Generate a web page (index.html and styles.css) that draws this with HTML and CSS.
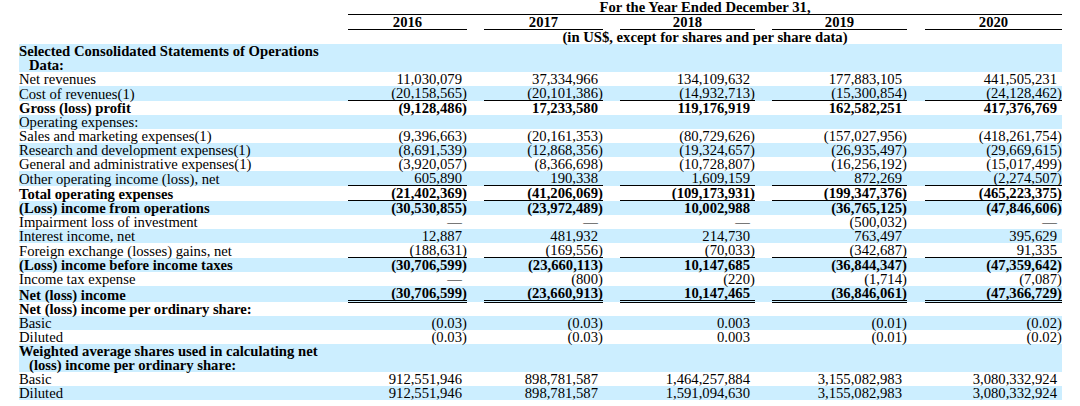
FILE: index.html
```html
<!DOCTYPE html>
<html>
<head>
<meta charset="utf-8">
<link rel="stylesheet" href="styles.css">
</head>
<body>
<table class="fin">
<colgroup>
<col class="c-label">
<col class="c-n1"><col class="c-p">
<col class="c-sp">
<col class="c-n1"><col class="c-p">
<col class="c-sp">
<col class="c-n2"><col class="c-p">
<col class="c-sp">
<col class="c-n2"><col class="c-p">
<col class="c-sp2">
<col class="c-n3"><col class="c-p">
</colgroup>
<thead>
<tr>
<td></td>
<td colspan="14" class="hd hd-top">For the Year Ended December 31,</td>
</tr>
<tr>
<td></td>
<td colspan="2" class="hd yr">2016</td><td></td>
<td colspan="2" class="hd yr">2017</td><td></td>
<td colspan="2" class="hd yr">2018</td><td></td>
<td colspan="2" class="hd yr">2019</td><td></td>
<td colspan="2" class="hd yr">2020</td>
</tr>
<tr>
<td></td>
<td colspan="14" class="hd">(in US$, except for shares and per share data)</td>
</tr>
</thead>
<tbody>
<tr class="blue b"><td class="label">Selected Consolidated Statements of Operations Data:</td><td></td><td></td><td></td><td></td><td></td><td></td><td></td><td></td><td></td><td></td><td></td><td></td><td></td><td></td></tr>
<tr><td class="label">Net revenues</td><td class="n">11,030,079</td><td class="p"></td><td></td><td class="n">37,334,966</td><td class="p"></td><td></td><td class="n">134,109,632</td><td class="p"></td><td></td><td class="n">177,883,105</td><td class="p"></td><td></td><td class="n">441,505,231</td><td class="p"></td></tr>
<tr class="blue ul"><td class="label">Cost of revenues(1)</td><td class="n">(20,158,565</td><td class="p">)</td><td></td><td class="n">(20,101,386</td><td class="p">)</td><td></td><td class="n">(14,932,713</td><td class="p">)</td><td></td><td class="n">(15,300,854</td><td class="p">)</td><td></td><td class="n">(24,128,462</td><td class="p">)</td></tr>
<tr class="b"><td class="label">Gross (loss) profit</td><td class="n">(9,128,486</td><td class="p">)</td><td></td><td class="n">17,233,580</td><td class="p"></td><td></td><td class="n">119,176,919</td><td class="p"></td><td></td><td class="n">162,582,251</td><td class="p"></td><td></td><td class="n">417,376,769</td><td class="p"></td></tr>
<tr class="blue"><td class="label">Operating expenses:</td><td></td><td></td><td></td><td></td><td></td><td></td><td></td><td></td><td></td><td></td><td></td><td></td><td></td><td></td></tr>
<tr><td class="label">Sales and marketing expenses(1)</td><td class="n">(9,396,663</td><td class="p">)</td><td></td><td class="n">(20,161,353</td><td class="p">)</td><td></td><td class="n">(80,729,626</td><td class="p">)</td><td></td><td class="n">(157,027,956</td><td class="p">)</td><td></td><td class="n">(418,261,754</td><td class="p">)</td></tr>
<tr class="blue"><td class="label">Research and development expenses(1)</td><td class="n">(8,691,539</td><td class="p">)</td><td></td><td class="n">(12,868,356</td><td class="p">)</td><td></td><td class="n">(19,324,657</td><td class="p">)</td><td></td><td class="n">(26,935,497</td><td class="p">)</td><td></td><td class="n">(29,669,615</td><td class="p">)</td></tr>
<tr><td class="label">General and administrative expenses(1)</td><td class="n">(3,920,057</td><td class="p">)</td><td></td><td class="n">(8,366,698</td><td class="p">)</td><td></td><td class="n">(10,728,807</td><td class="p">)</td><td></td><td class="n">(16,256,192</td><td class="p">)</td><td></td><td class="n">(15,017,499</td><td class="p">)</td></tr>
<tr class="blue ul"><td class="label">Other operating income (loss), net</td><td class="n">605,890</td><td class="p"></td><td></td><td class="n">190,338</td><td class="p"></td><td></td><td class="n">1,609,159</td><td class="p"></td><td></td><td class="n">872,269</td><td class="p"></td><td></td><td class="n">(2,274,507</td><td class="p">)</td></tr>
<tr class="b ul"><td class="label">Total operating expenses</td><td class="n">(21,402,369</td><td class="p">)</td><td></td><td class="n">(41,206,069</td><td class="p">)</td><td></td><td class="n">(109,173,931</td><td class="p">)</td><td></td><td class="n">(199,347,376</td><td class="p">)</td><td></td><td class="n">(465,223,375</td><td class="p">)</td></tr>
<tr class="blue b"><td class="label">(Loss) income from operations</td><td class="n">(30,530,855</td><td class="p">)</td><td></td><td class="n">(23,972,489</td><td class="p">)</td><td></td><td class="n">10,002,988</td><td class="p"></td><td></td><td class="n">(36,765,125</td><td class="p">)</td><td></td><td class="n">(47,846,606</td><td class="p">)</td></tr>
<tr><td class="label">Impairment loss of investment</td><td class="n">—</td><td class="p"></td><td></td><td class="n">—</td><td class="p"></td><td></td><td class="n">—</td><td class="p"></td><td></td><td class="n">(500,032</td><td class="p">)</td><td></td><td class="n">—</td><td class="p"></td></tr>
<tr class="blue"><td class="label">Interest income, net</td><td class="n">12,887</td><td class="p"></td><td></td><td class="n">481,932</td><td class="p"></td><td></td><td class="n">214,730</td><td class="p"></td><td></td><td class="n">763,497</td><td class="p"></td><td></td><td class="n">395,629</td><td class="p"></td></tr>
<tr class="ul"><td class="label">Foreign exchange (losses) gains, net</td><td class="n">(188,631</td><td class="p">)</td><td></td><td class="n">(169,556</td><td class="p">)</td><td></td><td class="n">(70,033</td><td class="p">)</td><td></td><td class="n">(342,687</td><td class="p">)</td><td></td><td class="n">91,335</td><td class="p"></td></tr>
<tr class="blue b"><td class="label">(Loss) income before income taxes</td><td class="n">(30,706,599</td><td class="p">)</td><td></td><td class="n">(23,660,113</td><td class="p">)</td><td></td><td class="n">10,147,685</td><td class="p"></td><td></td><td class="n">(36,844,347</td><td class="p">)</td><td></td><td class="n">(47,359,642</td><td class="p">)</td></tr>
<tr><td class="label">Income tax expense</td><td class="n">—</td><td class="p"></td><td></td><td class="n">(800</td><td class="p">)</td><td></td><td class="n">(220</td><td class="p">)</td><td></td><td class="n">(1,714</td><td class="p">)</td><td></td><td class="n">(7,087</td><td class="p">)</td></tr>
<tr class="blue b dl"><td class="label">Net (loss) income</td><td class="n">(30,706,599</td><td class="p">)</td><td></td><td class="n">(23,660,913</td><td class="p">)</td><td></td><td class="n">10,147,465</td><td class="p"></td><td></td><td class="n">(36,846,061</td><td class="p">)</td><td></td><td class="n">(47,366,729</td><td class="p">)</td></tr>
<tr class="b"><td class="label">Net (loss) income per ordinary share:</td><td></td><td></td><td></td><td></td><td></td><td></td><td></td><td></td><td></td><td></td><td></td><td></td><td></td><td></td></tr>
<tr class="blue"><td class="label">Basic</td><td class="n">(0.03</td><td class="p">)</td><td></td><td class="n">(0.03</td><td class="p">)</td><td></td><td class="n">0.003</td><td class="p"></td><td></td><td class="n">(0.01</td><td class="p">)</td><td></td><td class="n">(0.02</td><td class="p">)</td></tr>
<tr><td class="label">Diluted</td><td class="n">(0.03</td><td class="p">)</td><td></td><td class="n">(0.03</td><td class="p">)</td><td></td><td class="n">0.003</td><td class="p"></td><td></td><td class="n">(0.01</td><td class="p">)</td><td></td><td class="n">(0.02</td><td class="p">)</td></tr>
<tr class="blue b"><td class="label">Weighted average shares used in calculating net (loss) income per ordinary share:</td><td></td><td></td><td></td><td></td><td></td><td></td><td></td><td></td><td></td><td></td><td></td><td></td><td></td><td></td></tr>
<tr><td class="label">Basic</td><td class="n">912,551,946</td><td class="p"></td><td></td><td class="n">898,781,587</td><td class="p"></td><td></td><td class="n">1,464,257,884</td><td class="p"></td><td></td><td class="n">3,155,082,983</td><td class="p"></td><td></td><td class="n">3,080,332,924</td><td class="p"></td></tr>
<tr class="blue"><td class="label">Diluted</td><td class="n">912,551,946</td><td class="p"></td><td></td><td class="n">898,781,587</td><td class="p"></td><td></td><td class="n">1,591,094,630</td><td class="p"></td><td></td><td class="n">3,155,082,983</td><td class="p"></td><td></td><td class="n">3,080,332,924</td><td class="p"></td></tr>
</tbody>
</table>
</body>
</html>
```

FILE: styles.css
```css
html, body {
  margin: 0;
  padding: 0;
  background: #ffffff;
}

body {
  font-family: "Liberation Serif", "Times New Roman", serif;
  font-size: 14.67px;
  line-height: 14px;
  color: #000000;
}

.fin {
  border-collapse: collapse;
  table-layout: fixed;
  width: 1043px;
  margin-left: 19px;
}

.fin td {
  padding: 0;
  vertical-align: bottom;
  white-space: nowrap;
}

.c-label { width: 329px; }
.c-n1 { width: 114px; }
.c-n2 { width: 130px; }
.c-n3 { width: 132px; }
.c-p { width: 5px; }
.c-sp { width: 17px; }
.c-sp2 { width: 18px; }

.fin td.label {
  white-space: normal;
  padding-left: 10px;
  text-indent: -10px;
  text-align: left;
}

.hd {
  font-weight: bold;
  text-align: center;
}

.hd-top,
.yr {
  border-bottom: 1px solid #000000;
}

.n {
  text-align: right;
}

.p {
  text-align: left;
}

.blue {
  background: #cceeff;
}

.b {
  font-weight: bold;
}

.ul td.n,
.ul td.p {
  border-bottom: 1px solid #000000;
}

.dl td.n,
.dl td.p {
  border-bottom: 3px double #000000;
}
```
